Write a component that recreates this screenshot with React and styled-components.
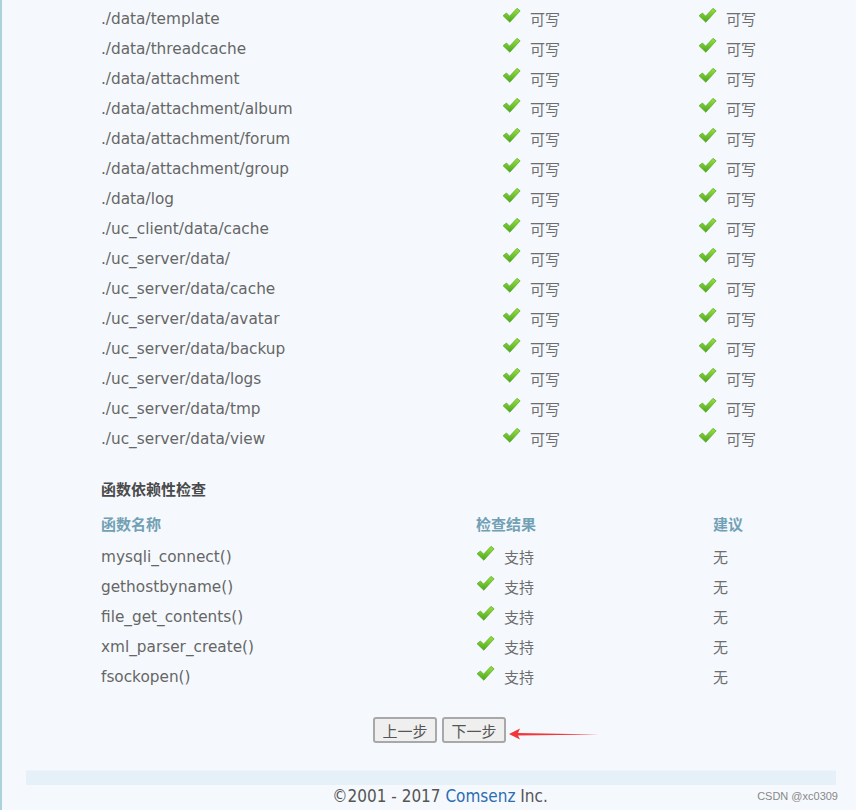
import React from "react";
import styled, { createGlobalStyle } from "styled-components";

const dirs = [
  "./data/template",
  "./data/threadcache",
  "./data/attachment",
  "./data/attachment/album",
  "./data/attachment/forum",
  "./data/attachment/group",
  "./data/log",
  "./uc_client/data/cache",
  "./uc_server/data/",
  "./uc_server/data/cache",
  "./uc_server/data/avatar",
  "./uc_server/data/backup",
  "./uc_server/data/logs",
  "./uc_server/data/tmp",
  "./uc_server/data/view",
];

const funcs = [
  "mysqli_connect()",
  "gethostbyname()",
  "file_get_contents()",
  "xml_parser_create()",
  "fsockopen()",
];

function Check() {
  return (
    <CheckIcon viewBox="0 0 18 16">
      <defs>
        <linearGradient id="ck" x1="0" y1="0" x2="0" y2="1">
          <stop offset="0" stopColor="#9be23f" />
          <stop offset="1" stopColor="#4aa81a" />
        </linearGradient>
      </defs>
      <path
        d="M1 8.2 L4.2 5.6 L7.2 8.6 L14.2 1.2 L17.2 3.6 L7.4 14.4 Z"
        fill="url(#ck)"
        stroke="#4d9e22"
        strokeWidth="0.6"
        strokeLinejoin="round"
      />
    </CheckIcon>
  );
}

function App() {
  return (
    <>
      <GlobalStyle />
      <Page>
        <Content>
          <DirTable>
            {dirs.map((d) => (
              <DirRow key={d}>
                <Cell>{d}</Cell>
                <StatusCell>
                  <Check />
                  可写
                </StatusCell>
                <StatusCell>
                  <Check />
                  可写
                </StatusCell>
              </DirRow>
            ))}
          </DirTable>

          <SectionTitle>函数依赖性检查</SectionTitle>
          <FuncTable>
            <FuncRow $head>
              <HeadCell>函数名称</HeadCell>
              <HeadCell>检查结果</HeadCell>
              <HeadCell>建议</HeadCell>
            </FuncRow>
            {funcs.map((f) => (
              <FuncRow key={f}>
                <Cell>{f}</Cell>
                <StatusCell>
                  <Check />
                  支持
                </StatusCell>
                <CjkCell>无</CjkCell>
              </FuncRow>
            ))}
          </FuncTable>

          <ButtonBar>
            <StepButton>上一步</StepButton>
            <StepButton>下一步</StepButton>
            <Arrow viewBox="0 0 90 14">
              <path d="M0 7 L11 1.5 L9 6 L90 7.6 L9 8.6 L11 12.5 Z" fill="#f2363a" />
            </Arrow>
          </ButtonBar>
        </Content>

        <FooterBand />
        <Footer>
          <Copy>
            ©2001 - 2017 <Brand>Comsenz</Brand> Inc.
          </Copy>
          <Mark>CSDN @xc0309</Mark>
        </Footer>
      </Page>
    </>
  );
}

const GlobalStyle = createGlobalStyle`
  body {
    margin: 0;
    background: #f5f9fd;
    font-family: "DejaVu Sans", "Noto Sans CJK SC", sans-serif;
  }
`;

const Page = styled.div`
  width: 856px;
  height: 810px;
  box-sizing: border-box;
  border-left: 2px solid #a9d2dc;
  background: #f5f9fd;
  overflow: hidden;
  display: flex;
  flex-direction: column;
`;

const Content = styled.div`
  padding-left: 99px;
  display: flex;
  flex-direction: column;
`;

const DirTable = styled.div`
  display: flex;
  flex-direction: column;
  padding-top: 4px;
`;

const DirRow = styled.div`
  display: grid;
  grid-template-columns: 401px 196px 1fr;
  height: 30px;
  align-items: center;
`;

const Cell = styled.div`
  font-size: 15.3px;
  color: #666;
  white-space: nowrap;
`;

const CjkCell = styled(Cell)`
  font-family: "Noto Sans CJK SC", sans-serif;
  font-size: 15px;
  color: #6e6e6e;
  margin-top: -2px;
`;

const StatusCell = styled(CjkCell)`
  display: flex;
  align-items: center;
  gap: 9px;
`;

const CheckIcon = styled.svg`
  width: 19px;
  height: 17px;
  margin-top: -5px;
  flex-shrink: 0;
`;

const SectionTitle = styled.div`
  margin-top: 25px;
  font-family: "Noto Sans CJK SC", sans-serif;
  font-weight: 700;
  font-size: 15px;
  color: #4a4a4a;
  height: 20px;
  line-height: 20px;
`;

const FuncTable = styled.div`
  display: flex;
  flex-direction: column;
  margin-top: 9px;
`;

const FuncRow = styled.div`
  display: grid;
  grid-template-columns: 375px 237px 1fr;
  height: ${(p) => (p.$head ? "29px" : "30px")};
  align-items: ${(p) => (p.$head ? "start" : "center")};
  padding-top: ${(p) => (p.$head ? "5px" : "0")};
`;

const HeadCell = styled.div`
  font-family: "Noto Sans CJK SC", sans-serif;
  font-weight: 700;
  font-size: 15px;
  color: #72a0b4;
`;

const ButtonBar = styled.div`
  display: flex;
  align-items: center;
  gap: 5px;
  margin-top: 25px;
  padding-left: 272px;
`;

const StepButton = styled.button`
  width: 64px;
  height: 26px;
  padding: 0;
  border: 2px solid #a8a8a8;
  border-radius: 3px;
  background: #efefef;
  color: #555;
  font-family: "Noto Sans CJK SC", sans-serif;
  font-size: 15px;
  line-height: 1;
`;

const Arrow = styled.svg`
  width: 90px;
  height: 14px;
  margin-left: -2px;
  margin-top: 7px;
`;

const FooterBand = styled.div`
  margin: 27px 20px 0 24px;
  height: 14px;
  background: #e6f0f9;
  border-top: 1px solid #eef4fa;
`;

const Footer = styled.div`
  display: flex;
  align-items: center;
  height: 22px;
  position: relative;
`;

const Copy = styled.div`
  flex: 1;
  text-align: center;
  padding-left: 22px;
  font-family: "DejaVu Sans Condensed", "DejaVu Sans", sans-serif;
  font-size: 17px;
  color: #555;
`;

const Brand = styled.span`
  color: #2c6cb3;
`;

const Mark = styled.div`
  position: absolute;
  right: 18px;
  top: 5px;
  font-family: "Liberation Sans", sans-serif;
  font-size: 11px;
  color: #888;
`;

export default App;
